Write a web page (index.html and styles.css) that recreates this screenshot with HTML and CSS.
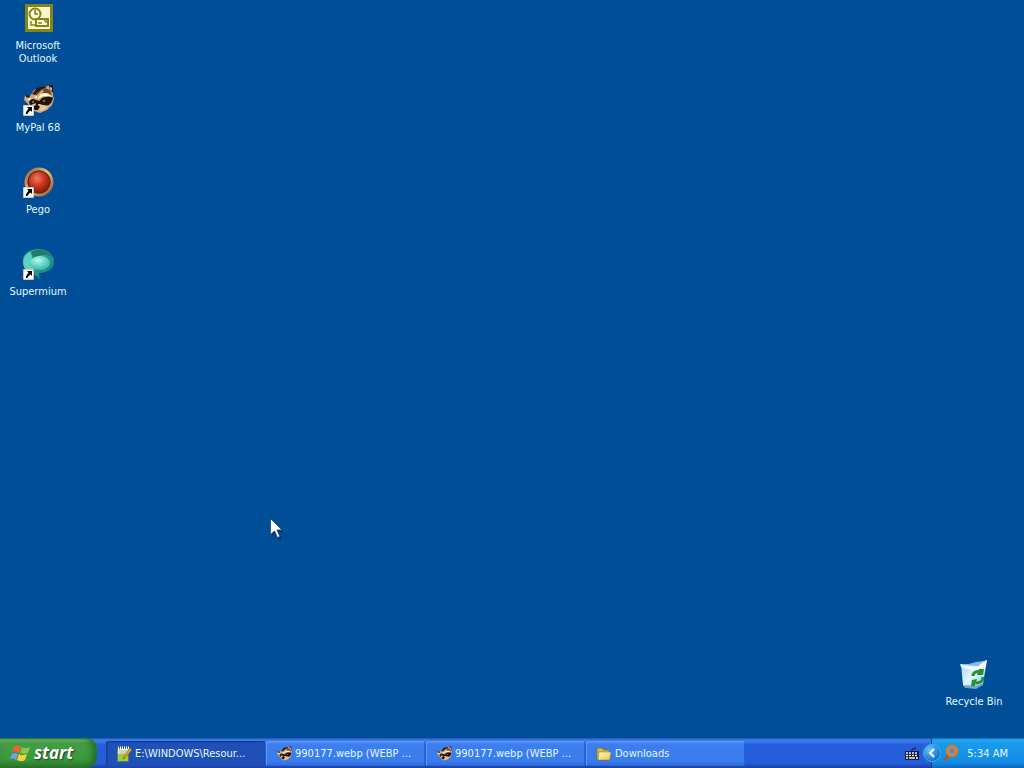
FILE: index.html
```html
<!DOCTYPE html>
<html lang="en">
<head>
<meta charset="utf-8">
<title>Desktop</title>
<link rel="stylesheet" href="styles.css">
</head>
<body>
<svg class="defs" width="0" height="0" aria-hidden="true">
  <defs>
    <radialGradient id="ruby" cx=".42" cy=".35" r=".65"><stop offset="0" stop-color="#ec8060"/><stop offset=".5" stop-color="#c93a22"/><stop offset="1" stop-color="#8b160c"/></radialGradient>
    <linearGradient id="gold" x1="0" y1="0" x2="1" y2="1"><stop offset="0" stop-color="#8a5a34"/><stop offset=".45" stop-color="#e6c080"/><stop offset="1" stop-color="#8f5a2a"/></linearGradient>
    <linearGradient id="teal" x1="0" y1="0" x2="1" y2="1"><stop offset="0" stop-color="#45b8a8"/><stop offset="1" stop-color="#127b7c"/></linearGradient>
    <radialGradient id="orb" cx=".4" cy=".3" r=".7"><stop offset="0" stop-color="#b0fbef"/><stop offset="1" stop-color="#35b9a9"/></radialGradient>
    <linearGradient id="bin" x1="0" y1="0" x2="1" y2="1"><stop offset="0" stop-color="#a5d2f2"/><stop offset=".5" stop-color="#e2f5ff"/><stop offset="1" stop-color="#8fc3e6"/></linearGradient>
    <linearGradient id="folder" x1="0" y1="0" x2="1" y2="1"><stop offset="0" stop-color="#fffbc0"/><stop offset="1" stop-color="#e5c650"/></linearGradient>
    <radialGradient id="round" cx=".35" cy=".3" r=".75"><stop offset="0" stop-color="#65c5fb"/><stop offset="1" stop-color="#0c65cd"/></radialGradient>
    <symbol id="shortcut" viewBox="0 0 11 11"><path fill="#fff" stroke="#222" stroke-width=".5" d="M0 0h11v11H0z"/><path fill="#000" d="M4 2h5v5L7.500 5.500C6 6.500 5 7.500 4.500 9H2.800C2.800 7 4 5.500 5.500 3.700z"/></symbol>
    <symbol id="raccoon" viewBox="0 0 32 32">
      <path fill="#cfa878" d="M3 11l5 1 4-6 8-3 6-1 3-1 2 3v8l1 3-2 6-5 5-7 3-6-2-6-7-4-4z"/>
      <path fill="#2b1a12" d="M10 10l5-6 7-2 3 1-6 3-6 5zM27 1l4 0v8l-3-3zM3 10l5 2-1 2-3-1z"/>
      <path fill="#6d452c" d="M14 9l9-5 5 2 2 6-4-3-6 0-6 4z"/>
      <path fill="#fff3da" d="M12 13l5-3 7-1 6 3-2 1-7-1-5 3zM5 15l3-1 2 1-2 2zM28 3l2 1-1 4z"/>
      <path fill="#21140f" d="M7 18c1-3 4-4 7-2l3 1 3-3c4-2 8-2 11 0-1 5-4 8-8 8l-6-2-4 3-5-2z"/>
      <path fill="#eac796" d="M16 20l5 1 5 1-2 3-5 2-5-1 2-2zM9 21l5-2-1 5-3-1z"/>
      <path fill="#d0ad83" d="M15 11l5-5 2 1-4 4-3 5z"/>
      <path fill="#120d0b" d="M12 22l4-1 2 2-2 3-3 0-2-2z"/>
      <circle cx="22" cy="17" r="1" fill="#b97c45"/><circle cx="11" cy="18" r="1" fill="#b97c45"/>
    </symbol>
    <symbol id="flag" viewBox="0 0 20 19">
      <path fill="#f26132" d="M4 3c2-2 4-2 7 0L9 9C6 7 4 7 2 8z"/><path fill="#89c84b" d="M12 3c3 2 5 1 8 0l-2 6c-3 1-5 1-8 0z"/><path fill="#719eff" d="M2 10c2-1 4-1 6 0l-2 6c-2-2-4-2-6-1z"/><path fill="#fbd23d" d="M9 10c3 2 5 1 8 0l-2 6c-3 2-5 1-8 0z"/>
    </symbol>
  </defs>
</svg>

<main class="desktop">
  <nav class="icons" aria-label="Programs">
    <a class="icon" href="#outlook">
      <svg class="picture" viewBox="0 0 32 32"><path fill="#858513" d="M3 2h28v28H3z"/><path fill="#f8f6cd" d="M6 5h22v22H6z"/><circle cx="13" cy="12" r="5.500" fill="#fffde8" stroke="#858513" stroke-width="2"/><path d="M13 8v4h3" fill="none" stroke="#77770b" stroke-width="1.500"/><path fill="#fffde8" stroke="#858513" stroke-width="2" d="M14 17h12v7H14z"/><path fill="none" stroke="#858513" stroke-width="1.500" d="M16 21h4M22 19h2v2M9 19v4h4"/></svg>
      <span>Microsoft Outlook</span>
    </a>
    <a class="icon" href="#mypal">
      <svg class="picture" viewBox="0 0 32 32"><use href="#raccoon" width="32" height="32"/><use href="#shortcut" x="1" y="21" width="11" height="11"/></svg>
      <span>MyPal 68</span>
    </a>
    <a class="icon" href="#pego">
      <svg class="picture" viewBox="0 0 32 32"><circle cx="17" cy="16" r="13" fill="#8a2014" stroke="url(#gold)" stroke-width="3"/><circle cx="17" cy="16" r="11" fill="url(#ruby)" stroke="#64200f"/><use href="#shortcut" x="1" y="21" width="11" height="11"/></svg>
      <span>Pego</span>
    </a>
    <a class="icon" href="#supermium">
      <svg class="picture" viewBox="0 0 32 32"><path fill="url(#teal)" d="M8 3c9-5 24-1 24 11 0 7-7 11-15 11 0 3 0 4 2 6-5-1-6-6-11-8C-1 20-2 7 8 3z"/><path fill="#237a68" d="M9 4c8-5 18-2 22 6-6-4-13-5-19 2z"/><path fill="#5bd3c0" d="M8 4c-9 5-8 15-3 19l9-2c-3-5-3-10-6-17z"/><ellipse cx="18" cy="15" rx="10" ry="7" fill="url(#orb)"/><use href="#shortcut" x="1" y="21" width="11" height="11"/></svg>
      <span>Supermium</span>
    </a>
  </nav>
  <a class="icon bin" href="#recycle">
    <svg class="picture" viewBox="0 0 32 32"><path fill="url(#bin)" d="M3 6c7 1 16 0 26-4l-4 24-7 4H8l-3-3z"/><path fill="#85b8dc" d="M7 7l11-3 8-1-6 5z"/><path fill="#f0faff" d="M2 6c5 2 12 2 17 3 4-1 6-4 10-7l-2 8-8 3C13 11 7 11 3 9z"/><path fill="#6fa5cf" d="M6 27l12 1 7-3v2l-7 4-10-1z"/><g fill="none" stroke="#27922b" stroke-width="3"><path d="M15 18c0-4 4-5 7-4M25 19c0 4-3 6-7 6"/></g><path fill="#27922b" d="M21 11l5 0-1 6-6 0zM14 22l5-1-2 7-4 0z"/></svg>
    <span>Recycle Bin</span>
  </a>
</main>

<svg class="pointer" viewBox="0 0 14 22" aria-hidden="true"><path fill="#063873" d="M2 3v16l4-3 3 6 3-1-3-6h5z"/><path fill="#fff" stroke="#142f5c" stroke-width=".7" d="M.5.500v16l4-3.500 3 6.500 2.500-1-3-6.500h5z"/></svg>

<footer class="taskbar">
  <button class="start" type="button"><svg class="flag" viewBox="0 0 20 19"><use href="#flag"/></svg>start</button>
  <div class="tasks">
    <button class="task active" type="button"><svg class="small" viewBox="0 0 16 16"><path fill="#eef6d8" stroke="#607b58" d="M1.500 2.500h11v13h-11z"/><path fill="#9bce45" d="M2 8h10v7H2z"/><path stroke="#fff" stroke-dasharray="1 1" stroke-width="3" d="M2 2h11"/><path stroke="#a5b894" d="M3 5h8M3 7h7"/><path fill="#e7a52c" stroke="#795222" stroke-width=".6" d="M14 2l2 2-7 8-2 1 1-3z"/></svg><span>E:\WINDOWS\Resour...</span></button>
    <button class="task" type="button"><svg class="small" viewBox="0 0 32 32"><use href="#raccoon"/></svg><span>990177.webp (WEBP ...</span></button>
    <button class="task" type="button"><svg class="small" viewBox="0 0 32 32"><use href="#raccoon"/></svg><span>990177.webp (WEBP ...</span></button>
    <button class="task" type="button"><svg class="small" viewBox="0 0 16 16"><path fill="#d9b83f" stroke="#75651e" stroke-width=".6" d="M1 3l1-1h4l2 2h5v3h1v6l-1 1H2l-1-1z"/><path fill="url(#folder)" stroke="#8a7423" stroke-width=".5" d="M3 6h12l-1 7-1 1H2z"/></svg><span>Downloads</span></button>
  </div>
  <button class="keyboard" type="button" aria-label="Keyboard"><svg viewBox="0 0 14 13"><path fill="none" stroke="#101f50" d="M7 4V2h3V0"/><path fill="#111b40" d="M0 4h14v9H0z"/><path stroke="#f1f2e7" stroke-width="1.500" stroke-dasharray="2 1" d="M1 6h12M1 8.500h12"/><path stroke="#f1f2e7" stroke-width="1.500" d="M1 11h2m1 0h6m1 0h2"/></svg></button>
  <div class="tray">
    <button class="expand" type="button" aria-label="Show hidden icons"><svg viewBox="0 0 18 18"><circle cx="9" cy="9" r="8.500" fill="url(#round)" stroke="#4da8eb"/><path fill="none" stroke="#fff" stroke-width="2" d="M11 5L7 9l4 4"/></svg></button>
    <button class="search" type="button" aria-label="Search"><svg viewBox="0 0 16 16"><path d="M6 10l-4 4" stroke="#b5561a" stroke-width="3" stroke-linecap="round"/><circle cx="9" cy="6" r="5" fill="#7497b5" stroke="#e47b20" stroke-width="2.500"/><circle cx="9" cy="6" r="1.500" fill="#b55d28"/></svg></button>
    <time datetime="05:34">5:34 AM</time>
  </div>
</footer>
</body>
</html>
```

FILE: styles.css
```css
* { box-sizing: border-box; }
body {
  margin: 0;
  min-height: 100vh;
  display: flex;
  flex-direction: column;
  background: #004e98;
  color: #e3faff;
  font: 11px/13px "DejaVu Sans Condensed", "Noto Sans", sans-serif;
}
.defs { position: absolute; }
button { font: inherit; color: inherit; border: 0; padding: 0; background: none; }
svg { display: block; }
.desktop {
  flex: 1;
  display: flex;
  justify-content: space-between;
  padding: 2px 12px 28px 0;
}
.icons { display: flex; flex-direction: column; }
.icon {
  display: flex;
  flex-direction: column;
  align-items: center;
  gap: 5px;
  width: 76px;
  height: 82px;
  color: inherit;
  text-align: center;
  text-decoration: none;
}
.icon span { width: 68px; }
.picture { width: 32px; height: 32px; }
.bin { align-self: flex-end; height: 52px; }
.pointer { position: absolute; left: 270px; top: 518px; width: 14px; height: 22px; }
.taskbar {
  display: flex;
  height: 30px;
  background: linear-gradient(#1b50a8 0, #3c80ef 2px, #3674eb 4px, #245edb 7px, #245edb 25px, #1941a5 30px);
}
.start {
  display: flex;
  align-items: center;
  gap: 4px;
  width: 97px;
  padding: 0 0 0 10px;
  border-radius: 0 10px 10px 0;
  background: linear-gradient(#28752b 0, #78bd76 2px, #459e45 5px, #3b983b 22px, #2c722d 30px);
  box-shadow: inset -5px 0 6px #23702d;
  color: #fff;
  font: italic bold 17px/22px "Open Sans", sans-serif;
  text-shadow: 1px 1px 2px #183d1b;
}
.flag { width: 20px; height: 19px; }
.tasks {
  flex: 1;
  display: flex;
  gap: 1px;
  min-width: 0;
  padding: 3px 9px 2px;
}
.task {
  flex: 0 1 159px;
  display: flex;
  align-items: center;
  gap: 3px;
  min-width: 0;
  padding: 0 8px 0 10px;
  border-radius: 2px;
  background: linear-gradient(#568ef3, #3c7ef0 4px, #397ced 20px, #316bdc);
  box-shadow: inset 1px 1px #619bf7, inset -1px -1px #2d62cc;
  text-align: left;
}
.task span { flex: 1; overflow: hidden; white-space: nowrap; text-overflow: ellipsis; }
.active { background: #1e50b7; box-shadow: inset 1px 1px 2px #10378c; }
.small { flex: none; width: 16px; height: 16px; }
.keyboard { width: 26px; }
.keyboard svg { width: 14px; height: 13px; }
.tray {
  display: flex;
  align-items: center;
  width: 93px;
  border-left: 1px solid #104794;
  background: linear-gradient(#1164b9 0, #29aaf2 2px, #199bed 5px, #128de7 24px, #1067bd 30px);
}
.expand { margin-left: -9px; }
.expand svg { width: 18px; height: 18px; }
.search { margin-left: 2px; }
.search svg { width: 16px; height: 16px; }
.tray time { flex: 1; padding-right: 16px; text-align: right; white-space: nowrap; }
```
